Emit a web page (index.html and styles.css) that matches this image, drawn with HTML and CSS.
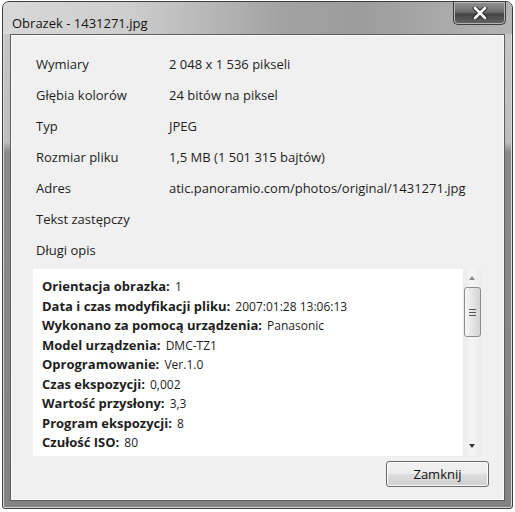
FILE: index.html
```html
<!DOCTYPE html>
<html lang="pl">
<head>
  <meta charset="UTF-8">
  <title>Obrazek - 1431271.jpg</title>
  <link rel="stylesheet" href="styles.css">
</head>
<body>
  <div class="window">
    <div class="titlebar">
      <span class="title">Obrazek - 1431271.jpg</span>
      <button class="close-btn" aria-label="Zamknij">
        <svg width="18" height="12" viewBox="0 0 18 12">
          <path d="M4 1 L14 11 M14 1 L4 11" stroke="#2a2a2a" stroke-width="4.6" stroke-linecap="round"/>
          <path d="M4 1 L14 11 M14 1 L4 11" stroke="#fff" stroke-width="2.6" stroke-linecap="round"/>
        </svg>
      </button>
    </div>

    <div class="client">
      <!-- General properties -->
      <div class="props">
        <div class="row"><span class="label">Wymiary</span><span class="value">2 048 x 1 536 pikseli</span></div>
        <div class="row"><span class="label">Głębia kolorów</span><span class="value">24 bitów na piksel</span></div>
        <div class="row"><span class="label">Typ</span><span class="value">JPEG</span></div>
        <div class="row"><span class="label">Rozmiar pliku</span><span class="value">1,5 MB (1 501 315 bajtów)</span></div>
        <div class="row"><span class="label">Adres</span><span class="value">atic.panoramio.com/photos/original/1431271.jpg</span></div>
        <div class="row"><span class="label">Tekst zastępczy</span><span class="value"></span></div>
        <div class="row"><span class="label">Długi opis</span><span class="value"></span></div>
      </div>

      <!-- EXIF box -->
      <div class="exif">
        <div class="exif-list">
          <p><b>Orientacja obrazka:</b> 1</p>
          <p><b>Data i czas modyfikacji pliku:</b> 2007:01:28 13:06:13</p>
          <p><b>Wykonano za pomocą urządzenia:</b> Panasonic</p>
          <p><b>Model urządzenia:</b> DMC-TZ1</p>
          <p><b>Oprogramowanie:</b> Ver.1.0</p>
          <p><b>Czas ekspozycji:</b> 0,002</p>
          <p><b>Wartość przysłony:</b> 3,3</p>
          <p><b>Program ekspozycji:</b> 8</p>
          <p><b>Czułość ISO:</b> 80</p>
        </div>
        <div class="scrollbar">
          <span class="arrow arrow-up"></span>
          <div class="thumb"><span class="grip"></span></div>
          <span class="arrow arrow-down"></span>
        </div>
      </div>

      <div class="footer">
        <button class="btn">Zamknij</button>
      </div>
    </div>
  </div>
</body>
</html>
```

FILE: styles.css
```css
/* Reset */
* {
  margin: 0;
  padding: 0;
  box-sizing: border-box;
}
body {
  width: 515px;
  height: 512px;
  background: #fff;
  font-family: "Open Sans", "Noto Sans", sans-serif;
  font-size: 12px;
  color: #1e1e1e;
  padding: 1px 2px 3px 2px;
}

/* Window frame */
.window {
  height: 508px;
  border: 1px solid #3e3e3e;
  border-radius: 7px 7px 3px 3px;
  background: linear-gradient(to bottom, #c8c8c8 0, #bdbdbd 140px, #8a8a8a 150px, #828282 100%);
  padding: 0 7px 7px 7px;
  display: flex;
  flex-direction: column;
  box-shadow: inset 0 0 0 1px #d8d8d8;
}

/* Title bar */
.titlebar {
  height: 32px;
  display: flex;
  align-items: flex-start;
  margin: 0 -7px;
  padding: 0 6px 0 9px;
  border-radius: 6px 6px 0 0;
  background: linear-gradient(to right, #d8d8d8 0, #cdcdcd 25%, #a2a2a2 55%, #9c9c9c 70%, #b4b4b4 100%);
}
.title {
  font-size: 13px;
  color: #141414;
  line-height: 18px;
  margin-top: 12px;
}
.close-btn {
  margin-left: auto;
  width: 53px;
  height: 23px;
  border: 1px solid #3c3c3c;
  border-top: none;
  border-radius: 0 0 5px 5px;
  background: linear-gradient(to bottom, #929292 0, #6e6e6e 45%, #444 55%, #666 100%);
  box-shadow: inset 0 0 0 1px #b5b5b5;
  display: flex;
  align-items: center;
  justify-content: center;
}

/* Client area */
.client {
  flex: 1;
  background: #f0f0f0;
  border: 1px solid #5e5e5e;
  box-shadow: inset 0 0 0 1px #fafafa;
  display: flex;
  flex-direction: column;
  padding: 13px 22px 0 25px;
}

.props .row {
  display: flex;
  height: 31px;
  align-items: center;
  font-size: 13px;
}
.label {
  width: 133px;
  flex: none;
}
.value {
  flex: 1;
  white-space: nowrap;
}

/* EXIF box */
.exif {
  display: flex;
  height: 187px;
  margin: 4px 1px 0 -3px;
  background: #fff;
}
.exif-list {
  flex: 1;
  padding: 8px 0 0 9px;
  font-size: 12px;
}
.exif-list p {
  height: 19.5px;
  line-height: 19.5px;
}
.exif-list b {
  font-size: 13px;
  font-weight: 700;
  margin-right: 2px;
}

/* Scrollbar */
.scrollbar {
  width: 18px;
  background: linear-gradient(to right, #ececec, #f4f4f4 50%, #ececec);
  display: flex;
  flex-direction: column;
  align-items: center;
  padding-top: 7px;
}
.arrow {
  width: 0;
  height: 0;
  border-left: 3.5px solid transparent;
  border-right: 3.5px solid transparent;
}
.arrow-up {
  border-bottom: 4px solid #8a8a8a;
}
.arrow-down {
  border-top: 4px solid #3a3a3a;
  margin-top: auto;
  margin-bottom: 8px;
}
.thumb {
  width: 17px;
  height: 50px;
  margin-top: 7px;
  border: 1px solid #8c8c8c;
  border-radius: 3px;
  background: linear-gradient(to right, #f6f6f6, #e2e2e2 60%, #d4d4d4);
  display: flex;
  align-items: center;
  justify-content: center;
}
.grip {
  width: 7px;
  height: 7px;
  border-top: 1px solid #555;
  border-bottom: 1px solid #555;
  background: linear-gradient(#555, #555) center / 100% 1px no-repeat;
}

/* Footer */
.footer {
  display: flex;
  justify-content: flex-end;
  padding-top: 5px;
  margin-right: -7px;
}
.btn {
  width: 103px;
  height: 26px;
  font-family: inherit;
  font-size: 13px;
  color: #111;
  border: 1px solid #6a6a6a;
  border-radius: 3px;
  background: linear-gradient(to bottom, #f2f2f2 0, #ebebeb 50%, #dddddd 51%, #cfcfcf 100%);
  box-shadow: inset 0 0 0 1px #fafafa;
}
```
